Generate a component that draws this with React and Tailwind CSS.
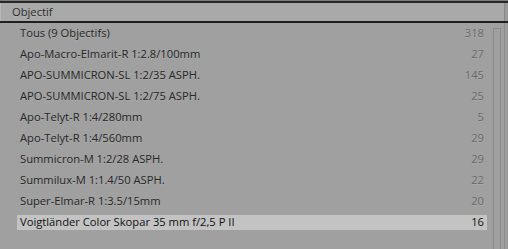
const lenses = [
  { name: 'Tous (9 Objectifs)', count: 318 },
  { name: 'Apo-Macro-Elmarit-R 1:2.8/100mm', count: 27 },
  { name: 'APO-SUMMICRON-SL 1:2/35 ASPH.', count: 145 },
  { name: 'APO-SUMMICRON-SL 1:2/75 ASPH.', count: 25 },
  { name: 'Apo-Telyt-R 1:4/280mm', count: 5 },
  { name: 'Apo-Telyt-R 1:4/560mm', count: 29 },
  { name: 'Summicron-M 1:2/28 ASPH.', count: 29 },
  { name: 'Summilux-M 1:1.4/50 ASPH.', count: 22 },
  { name: 'Super-Elmar-R 1:3.5/15mm', count: 20 },
  { name: 'Voigtländer Color Skopar 35 mm f/2,5 P II', count: 16, selected: true },
];

const App = () => {
  return (
    <div className="w-[508px] h-[249px] overflow-hidden bg-[#a0a0a0] flex flex-col text-[11.2px] font-['Open_Sans',sans-serif]">
      <div className="h-[1px] bg-[#7c7c7c]" />
      <div className="h-[2px] bg-[#262626]" />
      <div className="flex h-[18px]">
        <div className="flex-1 flex items-center pl-[11px] bg-[#a9a9a9] border-l border-[#b8b8b8] border-r border-r-[#888] text-[#2a2a2a] [text-shadow:0_1px_0_rgba(255,255,255,0.15)]">
          Objectif
        </div>
        <div className="w-[3px] bg-[#9a9a9a]" />
      </div>
      <div className="h-[2px] bg-[#1f1f1f]" />
      <div className="flex-1 flex">
        <div className="flex-1 flex flex-col pl-[17px] pr-[6px]">
          {lenses.map((l) => (
            <div key={l.name} className="h-[21px] flex items-center">
              <div
                className={
                  'flex-1 h-[15px] flex items-center justify-between px-[3px] ' +
                  (l.selected ? 'bg-[#c3c3c3] text-[#111]' : 'text-[#262626] [text-shadow:0_1px_0_rgba(255,255,255,0.12)]')
                }
              >
                <span>{l.name}</span>
                <span className={l.selected ? 'text-[#111]' : 'text-[#6b6b6b]'}>{l.count}</span>
              </div>
            </div>
          ))}
        </div>
        <div className="w-[8px] mt-[5px] border border-[#8c8c8c] border-b-0" />
        <div className="w-[3px]" />
        <div className="w-[1px] bg-[#8e8e8e]" />
        <div className="w-[3px] bg-[#9b9b9b]" />
      </div>
    </div>
  );
};

export default App;
